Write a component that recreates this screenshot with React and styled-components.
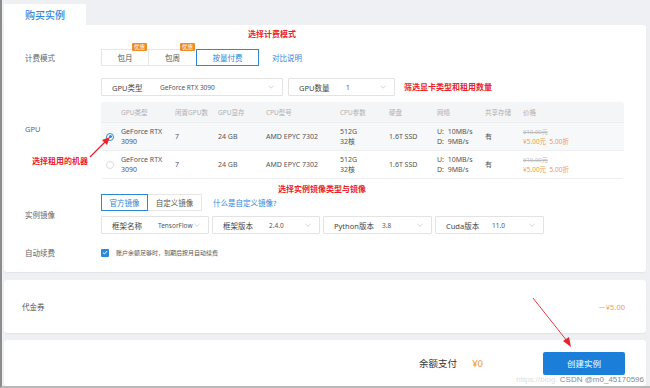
import React from "react";
import styled, { createGlobalStyle } from "styled-components";

const GlobalStyle = createGlobalStyle`
  html, body {
    margin: 0;
    padding: 0;
    background: #eff0f4;
    font-family: "Noto Sans", "Noto Sans CJK SC", sans-serif;
  }
`;

const BLUE = "#2c87d8";
const ORANGE = "#f39a45";
const RED = "#e9222c";

const Page = styled.div`
  position: relative;
  width: 650px;
  height: 388px;
  box-sizing: border-box;
  border-left: 2px solid #8c8c8c;
  border-bottom: 2px solid #b8b8b8;
  padding: 4px 4px 0 2px;
  background: #eff0f4;
  overflow: hidden;
  display: flex;
  flex-direction: column;
`;

const TabBar = styled.div`
  display: flex;
  height: 21px;
`;

const Tab = styled.div`
  width: 82px;
  background: #fff;
  color: ${BLUE};
  font-size: 10px;
  font-weight: 500;
  display: flex;
  align-items: center;
  padding-left: 21px;
  box-sizing: border-box;
`;

const Card = styled.div`
  background: #fff;
  border-radius: ${(p) => (p.$top ? "0 3px 3px 3px" : "3px")};
  box-shadow: 0 1px 2px rgba(0, 0, 0, 0.06);
  padding: ${(p) => p.$pad || "0"};
  margin-bottom: ${(p) => p.$mb || "0"};
  height: ${(p) => p.$h || "auto"};
  box-sizing: border-box;
  display: flex;
  flex-direction: column;
`;

const Note = styled.div`
  color: ${RED};
  font-size: 8px;
  font-weight: 700;
  line-height: 10px;
  margin-left: ${(p) => p.$ml || "0"};
  margin-top: ${(p) => p.$mt || "0"};
`;

const Row = styled.div`
  display: flex;
  align-items: center;
  margin-top: ${(p) => p.$mt || "0"};
`;

const Label = styled.div`
  width: 76px;
  flex: none;
  font-size: 7.5px;
  color: #666;
`;

const Content = styled.div`
  display: flex;
  flex-direction: column;
  gap: ${(p) => p.$gap || "0"};
`;

const Inline = styled.div`
  display: flex;
  align-items: center;
  gap: ${(p) => p.$gap || "0"};
`;

const Seg = styled.div`
  display: flex;
`;

const SegBtn = styled.div`
  position: relative;
  width: ${(p) => p.$w};
  height: 17px;
  box-sizing: border-box;
  border: 1px solid ${(p) => (p.$active ? BLUE : "#e6e6e6")};
  margin-left: ${(p) => (p.$first ? "0" : "-1px")};
  z-index: ${(p) => (p.$active ? 1 : 0)};
  color: ${(p) => (p.$active ? BLUE : "#555")};
  font-size: 7.5px;
  display: flex;
  align-items: center;
  justify-content: center;
  background: #fff;
`;

const Badge = styled.span`
  position: absolute;
  top: -7px;
  right: 1px;
  background: #f08a24;
  color: #fff;
  font-size: 5.5px;
  line-height: 8px;
  padding: 0 2px;
  border-radius: 1px;
`;

const Link = styled.span`
  color: ${BLUE};
  font-size: 7.5px;
  margin-left: ${(p) => p.$ml || "0"};
`;

const Select = styled.div`
  width: ${(p) => p.$w};
  height: 18px;
  box-sizing: border-box;
  border: 1px solid #e3e3e3;
  border-radius: 1px;
  display: flex;
  align-items: center;
  padding: 0 8px 0 10px;
  background: #fff;
`;

const SelName = styled.span`
  font-size: 7.5px;
  color: #444;
  width: ${(p) => p.$w};
  flex: none;
`;

const SelValue = styled.span`
  font-size: 6.5px;
  color: #555;
  flex: 1;
`;

const Chevron = () => (
  <svg width="6" height="4" viewBox="0 0 6 4">
    <path d="M0.5 0.8 L3 3.2 L5.5 0.8" fill="none" stroke="#c4c4c4" strokeWidth="0.7" />
  </svg>
);

const Table = styled.div`
  width: 523px;
  border-radius: 3px;
  overflow: hidden;
  border-bottom: 1px solid #eee;
`;

const COLS = "20px 54px 43px 48px 74px 49px 48px 48px 38px 1fr";

const THead = styled.div`
  display: grid;
  grid-template-columns: ${COLS};
  height: 20px;
  align-items: center;
  background: #f4f5f7;
  color: #b0b0b0;
  font-size: 6.5px;
`;

const TRow = styled.div`
  display: grid;
  grid-template-columns: ${COLS};
  height: 28px;
  align-items: center;
  background: ${(p) => (p.$sel ? "#f7f8fa" : "#fff")};
  border-top: 1px solid #efefef;
  box-sizing: border-box;
  color: #555;
  font-size: 7px;
  line-height: 10px;
`;

const Cell = styled.div`
  display: flex;
  flex-direction: column;
  justify-content: center;
`;

const Radio = styled.span`
  width: 8px;
  height: 8px;
  box-sizing: border-box;
  border-radius: 50%;
  border: 1px solid ${(p) => (p.$on ? BLUE : "#ddd")};
  margin-left: 5px;
  display: flex;
  align-items: center;
  justify-content: center;
  background: #fff;
  &::after {
    content: "";
    width: 3px;
    height: 3px;
    border-radius: 50%;
    background: ${(p) => (p.$on ? BLUE : "transparent")};
  }
`;

const OldPrice = styled.span`
  color: #bbb;
  font-size: 6px;
  text-decoration: line-through;
`;

const NewPrice = styled.span`
  color: ${ORANGE};
  font-size: 6.5px;
`;

const Check = styled.span`
  width: 8px;
  height: 8px;
  background: ${BLUE};
  border-radius: 1px;
  display: flex;
  align-items: center;
  justify-content: center;
`;

const SmallText = styled.span`
  font-size: 6px;
  color: #555;
  margin-left: 7px;
`;

const Between = styled.div`
  display: flex;
  align-items: center;
  justify-content: space-between;
  flex: 1;
  padding: 0 21px 0 18px;
`;

const Muted = styled.span`
  font-size: 7.5px;
  color: #555;
`;

const Price = styled.span`
  color: ${ORANGE};
  font-size: ${(p) => p.$size || "7.5px"};
  margin-left: ${(p) => p.$ml || "0"};
`;

const PayBar = styled.div`
  display: flex;
  align-items: center;
  justify-content: flex-end;
  flex: 1;
  padding-right: 21px;
`;

const PayLabel = styled.span`
  font-size: 9.5px;
  color: #333;
`;

const CreateBtn = styled.div`
  width: 82px;
  height: 23px;
  background: #1b7fd9;
  color: #fff;
  font-size: 8.5px;
  border-radius: 2px;
  display: flex;
  align-items: center;
  justify-content: center;
  margin-left: 60px;
`;

const Overlay = styled.svg`
  position: absolute;
  left: 0;
  top: 0;
  pointer-events: none;
`;

const MachineNote = styled.div`
  position: absolute;
  left: 30px;
  top: 155px;
  color: ${RED};
  font-size: 8px;
  font-weight: 700;
`;

const Watermark = styled.div`
  position: absolute;
  right: 6px;
  bottom: 2px;
  font-size: 8px;
  color: #8a8a8a;
  font-family: "Liberation Sans", sans-serif;
  & span {
    color: #e0e0e0;
  }
`;

const rows = [{ sel: true }, { sel: false }];

export default function App() {
  return (
    <>
      <GlobalStyle />
      <Page>
        <TabBar>
          <Tab>购买实例</Tab>
        </TabBar>
        <Card $top $pad="4px 0 12px 21px" $mb="8px" $h="247px">
          <Note $ml="223px">选择计费模式</Note>
          <Row $mt="10px">
            <Label>计费模式</Label>
            <Inline>
              <Seg>
                <SegBtn $w="48px" $first>
                  包月<Badge>优惠</Badge>
                </SegBtn>
                <SegBtn $w="49px">
                  包周<Badge>优惠</Badge>
                </SegBtn>
                <SegBtn $w="63px" $active>
                  按量付费
                </SegBtn>
              </Seg>
              <Link $ml="13px">对比说明</Link>
            </Inline>
          </Row>
          <Row $mt="12px">
            <Label>GPU</Label>
            <Content $gap="6px">
              <Inline $gap="5px">
                <Select $w="182px">
                  <SelName $w="48px">GPU类型</SelName>
                  <SelValue>GeForce RTX 3090</SelValue>
                  <Chevron />
                </Select>
                <Select $w="107px">
                  <SelName $w="47px">GPU数量</SelName>
                  <SelValue>1</SelValue>
                  <Chevron />
                </Select>
                <Note $ml="4px">筛选显卡类型和租用数量</Note>
              </Inline>
              <Table>
                <THead>
                  <Cell />
                  <Cell>GPU类型</Cell>
                  <Cell>闲置GPU数</Cell>
                  <Cell>GPU显存</Cell>
                  <Cell>CPU型号</Cell>
                  <Cell>CPU参数</Cell>
                  <Cell>硬盘</Cell>
                  <Cell>网络</Cell>
                  <Cell>共享存储</Cell>
                  <Cell>价格</Cell>
                </THead>
                {rows.map((r, i) => (
                  <TRow key={i} $sel={r.sel}>
                    <Cell>
                      <Radio $on={r.sel} />
                    </Cell>
                    <Cell>
                      <span>GeForce RTX</span>
                      <span>3090</span>
                    </Cell>
                    <Cell>7</Cell>
                    <Cell>24 GB</Cell>
                    <Cell>AMD EPYC 7302</Cell>
                    <Cell>
                      <span>512G</span>
                      <span>32核</span>
                    </Cell>
                    <Cell>1.6T SSD</Cell>
                    <Cell>
                      <span>U:&nbsp; 10MB/s</span>
                      <span>D:&nbsp; 9MB/s</span>
                    </Cell>
                    <Cell>有</Cell>
                    <Cell>
                      <OldPrice>¥10.00元</OldPrice>
                      <NewPrice>¥5.00元&nbsp; 5.00折</NewPrice>
                    </Cell>
                  </TRow>
                ))}
              </Table>
            </Content>
          </Row>
          <Note $ml="253px" $mt="5px">选择实例镜像类型与镜像</Note>
          <Row>
            <Label>实例镜像</Label>
            <Content $gap="5px">
              <Inline>
                <Seg>
                  <SegBtn $w="47px" $first $active>
                    官方镜像
                  </SegBtn>
                  <SegBtn $w="55px">自定义镜像</SegBtn>
                </Seg>
                <Link $ml="11px">什么是自定义镜像?</Link>
              </Inline>
              <Inline $gap="3px">
                <Select $w="108px">
                  <SelName $w="46px">框架名称</SelName>
                  <SelValue>TensorFlow</SelValue>
                  <Chevron />
                </Select>
                <Select $w="108px">
                  <SelName $w="46px">框架版本</SelName>
                  <SelValue>2.4.0</SelValue>
                  <Chevron />
                </Select>
                <Select $w="109px">
                  <SelName $w="48px">Python版本</SelName>
                  <SelValue>3.8</SelValue>
                  <Chevron />
                </Select>
                <Select $w="109px">
                  <SelName $w="46px">Cuda版本</SelName>
                  <SelValue>11.0</SelValue>
                  <Chevron />
                </Select>
              </Inline>
            </Content>
          </Row>
          <Row $mt="13px">
            <Label>自动续费</Label>
            <Inline>
              <Check>
                <svg width="6" height="5" viewBox="0 0 6 5">
                  <path d="M0.8 2.5 L2.4 4 L5.2 1" fill="none" stroke="#fff" strokeWidth="1" />
                </svg>
              </Check>
              <SmallText>账户余额足够时，到期后按月自动续费</SmallText>
            </Inline>
          </Row>
        </Card>
        <Card $h="53px" $mb="7px">
          <Between>
            <Muted>代金券</Muted>
            <Price>－¥5.00</Price>
          </Between>
        </Card>
        <Card $h="46px">
          <PayBar>
            <PayLabel>余额支付</PayLabel>
            <Price $size="9.5px" $ml="15px">¥0</Price>
            <CreateBtn>创建实例</CreateBtn>
          </PayBar>
        </Card>
        <MachineNote>选择租用的机器</MachineNote>
        <Overlay width="650" height="388" viewBox="0 0 650 388">
          <g stroke={RED} fill={RED}>
            <line x1="88" y1="157" x2="104" y2="141" strokeWidth="1.2" />
            <polygon points="108,137 100,140 105,145" stroke="none" />
            <line x1="531" y1="298" x2="565" y2="341" strokeWidth="0.9" />
            <polygon points="569,347 561,341 567,337" stroke="none" />
          </g>
        </Overlay>
        <Watermark>
          <span>https://blog.</span> CSDN @m0_45170596
        </Watermark>
      </Page>
    </>
  );
}
